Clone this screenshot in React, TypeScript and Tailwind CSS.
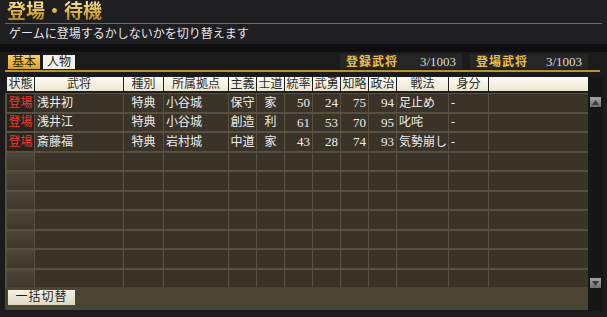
import React from 'react';

type Col = { label: string; w: string; align: string };

const cols: Col[] = [
  { label: '状態', w: 'w-[27px]', align: 'justify-center' },
  { label: '武将', w: 'w-[88px]', align: 'justify-start' },
  { label: '種別', w: 'w-[39px]', align: 'justify-center' },
  { label: '所属拠点', w: 'w-[64px]', align: 'justify-start' },
  { label: '主義', w: 'w-[27px]', align: 'justify-center' },
  { label: '士道', w: 'w-[27px]', align: 'justify-center' },
  { label: '統率', w: 'w-[27px]', align: 'justify-end' },
  { label: '武勇', w: 'w-[27px]', align: 'justify-end' },
  { label: '知略', w: 'w-[27px]', align: 'justify-end' },
  { label: '政治', w: 'w-[27px]', align: 'justify-end' },
  { label: '戦法', w: 'w-[51px]', align: 'justify-start' },
  { label: '身分', w: 'w-[39px]', align: 'justify-start' },
  { label: '', w: 'w-[99px]', align: 'justify-start' },
];

const rows: string[][] = [
  ['登場', '浅井初', '特典', '小谷城', '保守', '家', '50', '24', '75', '94', '足止め', '-', ''],
  ['登場', '浅井江', '特典', '小谷城', '創造', '利', '61', '53', '70', '95', '叱咤', '-', ''],
  ['登場', '斎藤福', '特典', '岩村城', '中道', '家', '43', '28', '74', '93', '気勢崩し', '-', ''],
];

const font = "font-['Liberation_Serif','Noto_Sans_CJK_JP',serif]";

function StatBox({ label, value, w }: { label: string; value: string; w: string }) {
  return (
    <div className={`${w} h-[15px] bg-[#262626] flex items-center justify-between px-[6px]`}>
      <span className="text-[12px] leading-none font-bold text-[#e8c04a] tracking-[1px]">{label}</span>
      <span className="text-[13px] leading-none text-[#dcdcdc]">{value}</span>
    </div>
  );
}

function ScrollBtn({ up }: { up: boolean }) {
  return (
    <div className="w-[11px] h-[10px] bg-gradient-to-b from-[#a6a6a6] to-[#6e6e6e] flex items-center justify-center">
      <svg width="7" height="5" viewBox="0 0 7 5">
        {up ? <polygon points="3.5,0 7,5 0,5" fill="#3a3a3a" /> : <polygon points="0,0 7,0 3.5,5" fill="#3a3a3a" />}
      </svg>
    </div>
  );
}

export default function App() {
  const empty = Array.from({ length: 7 }, () => cols.map(() => ''));
  const allRows = [...rows, ...empty];

  return (
    <div className={`w-[607px] h-[317px] bg-[#1b1b1b] overflow-hidden ${font}`}>
      {/* title */}
      <div className="h-[44px] bg-[#1f1f21] px-[5px]">
        <div className="h-[24px] border-b border-[#6a6a6a] pl-[2px]">
          <span className="text-[19px] leading-[23px] font-bold bg-gradient-to-b from-[#fbe9a0] via-[#e2b540] to-[#a77a18] bg-clip-text text-transparent">
            登場・待機
          </span>
        </div>
        <div className="pl-[4px] pt-[3px] text-[12px] leading-[14px] text-[#e6e6e6]">
          ゲームに登場するかしないかを切り替えます
        </div>
      </div>
      <div className="h-[8px] bg-[#0e0e0e]" />

      {/* tabs + stats */}
      <div className="ml-[5px] mr-[7px] h-[20px] flex items-end border-b-2 border-[#b8962e]">
        <div className="ml-[3px] mb-[1px] w-[32px] h-[14px] bg-gradient-to-b from-[#f8d560] to-[#d9a020] text-[#2a1e08] text-[12px] leading-[14px] text-center">基本</div>
        <div className="ml-[3px] mb-[1px] w-[32px] h-[14px] bg-[#f4f1e6] text-[#222] text-[12px] leading-[14px] text-center">人物</div>
        <div className="ml-auto flex gap-[8px] mb-[1px] mr-[12px]">
          <StatBox label="登録武将" value="3/1003" w="w-[122px]" />
          <StatBox label="登場武将" value="3/1003" w="w-[118px]" />
        </div>
      </div>

      {/* table + scrollbar */}
      <div className="mt-[5px] ml-[5px] flex">
        <div className="w-[583px]">
          <div className="flex gap-px pl-[2px] bg-[#1f1d19] pb-[2px]">
            {cols.map((c, i) => (
              <div
                key={i}
                className={`${c.w} h-[14px] bg-gradient-to-b from-[#fdfcf3] to-[#ebe6d2] text-[#2b2b2b] text-[12px] leading-[14px] text-center overflow-hidden whitespace-nowrap`}
              >
                {c.label}
              </div>
            ))}
          </div>
          <div className="bg-[#5a5040] pl-[2px] pt-[1px] flex flex-col gap-[2px]">
            {allRows.map((r, ri) => (
              <div key={ri} className="flex gap-px">
                {cols.map((c, ci) => (
                  <div
                    key={ci}
                    className={`${c.w} h-[17.5px] flex items-center ${c.align} px-[2px] ${
                      ci >= 6 && ci <= 9 ? 'text-[13px]' : 'text-[12px]'
                    } leading-none whitespace-nowrap overflow-hidden ${
                      ci === 0
                        ? r[0]
                          ? 'bg-[#2a231c] text-[#ee3a2c]'
                          : 'bg-gradient-to-b from-[#4e4537] to-[#3e372b]'
                        : 'bg-[#3a3428] text-[#ececec]'
                    }`}
                  >
                    {r[ci]}
                  </div>
                ))}
              </div>
            ))}
          </div>
          <div className="h-[23px] bg-[#4c4434] pl-[3px] pt-[3px]">
            <div className="w-[67px] h-[15px] bg-gradient-to-b from-[#f6f3e6] to-[#dcd6c2] text-[#222] text-[12px] leading-[15px] text-center tracking-[1px]">
              一括切替
            </div>
          </div>
        </div>
        <div className="w-[15px] h-[234px] bg-[#161616] flex flex-col items-center pt-[20px] pb-[23px] justify-between">
          <ScrollBtn up />
          <ScrollBtn up={false} />
        </div>
      </div>
    </div>
  );
}
